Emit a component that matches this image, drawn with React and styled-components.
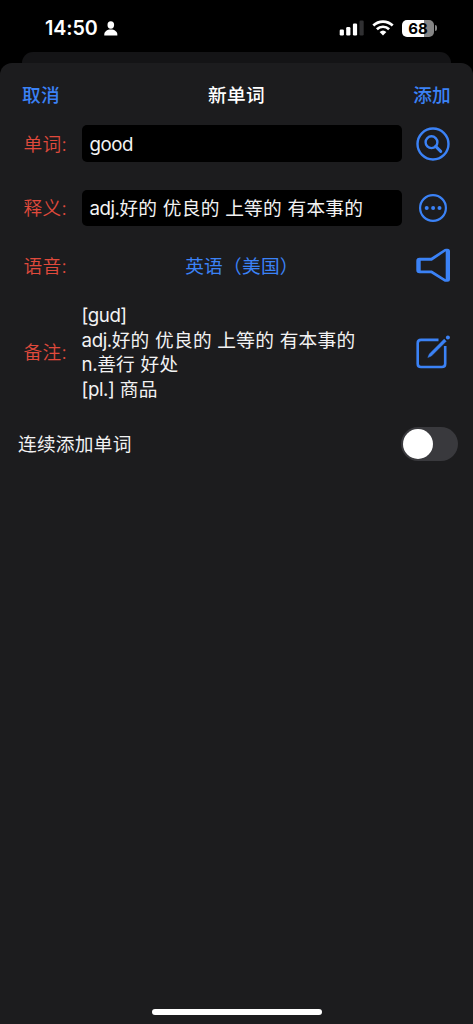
import { useState } from 'react';
import styled, { createGlobalStyle } from 'styled-components';

const blue = '#3b82f6';

function App() {

  const [keepAdding, setKeepAdding] = useState(false);

  return (
    <Screen>
      <GlobalStyle />
      <StatusBar>
        <Clock>14:50</Clock>
        <PersonIcon />
        <StatusIcons>
          <SignalIcon />
          <WifiIcon />
          <Battery><Level>68</Level></Battery>
          <BatteryCap />
        </StatusIcons>
      </StatusBar>
      <BackSheet />
      <Sheet>
        <NavBar>
          <NavButton>取消</NavButton>
          <Title>新单词</Title>
          <NavButton $end>添加</NavButton>
        </NavBar>

        <Row $height={37}>
          <Label>单词:</Label>
          <Field $line={39}><Latin>good</Latin></Field>
          <IconButton aria-label="search"><SearchIcon /></IconButton>
        </Row>
        <Row $height={36} $top={28}>
          <Label $lift={4}>释义:</Label>
          <Field $line={38}><Latin>adj.</Latin>好的 优良的 上等的 有本事的</Field>
          <IconButton aria-label="more"><MoreIcon /></IconButton>
        </Row>
        <Row $height={36} $top={21}>
          <Label>语音:</Label>
          <Language>英语（美国）</Language>
          <IconButton aria-label="speak"><SpeakerIcon /></IconButton>
        </Row>
        <Row $height={100} $top={19}>
          <Label $lift={4}>备注:</Label>
          <Notes>
            <p><Latin>[gud]</Latin></p>
            <p><Latin>adj.</Latin>好的 优良的 上等的 有本事的</p>
            <p><Latin>n.</Latin>善行 好处</p>
            <p><Latin>[pl.]</Latin> 商品</p>
          </Notes>
          <IconButton aria-label="edit"><EditIcon /></IconButton>
        </Row>

        <SwitchRow>
          <SwitchLabel>连续添加单词</SwitchLabel>
          <Switch role="switch" aria-checked={keepAdding} $on={keepAdding} onClick={() => setKeepAdding(!keepAdding)}>
            <Knob />
          </Switch>
        </SwitchRow>
        <HomeIndicator />
      </Sheet>
    </Screen>
  )
}

function PersonIcon() {
  return (
    <svg width="14" height="15" viewBox="0 0 14 15" fill="#fff">
      <ellipse cx="6.8" cy="4" rx="3.3" ry="3.7" />
      <path d="M.3 14.400C-.2 11 2.600 8.600 6.800 8.600s7 2.400 6.500 5.800Z" />
    </svg>
  )
}

function SignalIcon() {
  return (
    <svg width="25" height="16" viewBox="0 0 25 16" fill="#fff">
      <rect x="0.7" y="9.5" width="4.2" height="6" rx="1.2" />
      <rect x="7.2" y="7" width="4.2" height="8.5" rx="1.2" />
      <rect x="13.9" y="3.5" width="4.2" height="12" rx="1.2" />
      <rect x="20.5" y="0.5" width="4.2" height="15" rx="1.2" fill="#303032" />
    </svg>
  )
}

function WifiIcon() {
  return (
    <svg width="22" height="16" viewBox="0 0 22 16" fill="none" stroke="#fff" strokeWidth="2.7">
      <path d="M1.300 5.500a14 14 0 0 1 19.400 0" />
      <path d="M4.900 9.200a8.800 8.800 0 0 1 12.200 0" />
      <path d="M7.600 12.100a5 5 0 0 1 6.800 0L11 15.600Z" fill="#fff" stroke="none" />
    </svg>
  )
}

function SearchIcon() {
  return (
    <svg width="34" height="34" viewBox="0 0 34 34" fill="none" stroke={blue} strokeWidth="2.4">
      <circle cx="17" cy="17" r="15.5" />
      <circle cx="15.5" cy="15.2" r="5.9" />
      <path d="m19.700 19.400 5 5" strokeWidth="3" strokeLinecap="round" />
    </svg>
  )
}

function MoreIcon() {
  return (
    <svg width="34" height="34" viewBox="0 0 34 34" fill={blue}>
      <circle cx="17" cy="17" r="12.9" fill="none" stroke={blue} strokeWidth="2.2" />
      <circle cx="10.7" cy="17.1" r="2" />
      <circle cx="17.1" cy="17.1" r="2" />
      <circle cx="23.5" cy="17.1" r="2" />
    </svg>
  )
}

function SpeakerIcon() {
  return (
    <svg width="34" height="34" viewBox="0 0 34 34" fill={blue} fillRule="evenodd">
      <path d="M3.500 9.800H15L27.500 1.700Q28.800.800 30 .800h1.500Q34 .800 34 3.300v28q0 2.500-2.500 2.500H30q-1.200 0-2.500-.900L15 25.300H3.500Q.300 25.300.300 22.100V13Q.300 9.800 3.500 9.800Z M4.700 12.700v9.700h11.200L29.700 31.300V3.300L15.900 12.700Z" />
    </svg>
  )
}

function EditIcon() {
  return (
    <svg width="34" height="34" viewBox="0 0 34 34" fill="none" stroke={blue} strokeWidth="2.6">
      <path d="M22.500 4.900H5Q1.700 4.900 1.700 8.200v20.500Q1.700 32 5 32h20.900q3.300 0 3.300-3.300V10.900" />
      <path d="M11.800 22.600 13.300 19 28.200 4.100 30.300 6.200 15.400 21.100Z" fill={blue} stroke={blue} strokeWidth=".4" />
      <circle cx="31.9" cy="2.4" r="2" fill={blue} stroke="none" />
    </svg>
  )
}

const GlobalStyle = createGlobalStyle`
  * {
    box-sizing: border-box;
  }

  body {
    margin: 0;
    background: #000;
  }

  p {
    margin: 0;
  }

  button {
    padding: 0;
    border: 0;
    background: none;
    font: inherit;
    letter-spacing: inherit;
    cursor: pointer;
  }
`;

const Screen = styled.div`
  display: flex;
  flex-direction: column;
  width: 100%;
  height: 1024px;
  overflow: hidden;
  background: #000;
  color: #f2f2f3;
  font-family: Inter, 'Noto Sans CJK SC', sans-serif;
  font-size: 18.7px;
  letter-spacing: 0.25px;
`;

const StatusBar = styled.header`
  display: flex;
  align-items: center;
  height: 52px;
  padding: 4px 36px 0 45px;
`;

const Clock = styled.span`
  width: 53px;
  margin-right: 6px;
  color: #fff;
  font-size: 19.7px;
  font-weight: 600;
  letter-spacing: -0.1px;
`;

const StatusIcons = styled.div`
  display: flex;
  align-items: center;
  margin-left: auto;

  svg + svg {
    margin-left: 8px;
  }
`;

const Battery = styled.div`
  display: flex;
  align-items: center;
  justify-content: center;
  width: 32px;
  height: 17px;
  margin-left: 8px;
  border-radius: 5px;
  background: linear-gradient(to right, #fff 68%, #858585 68%);
`;

const Level = styled.span`
  color: #000;
  font-size: 15px;
  font-weight: 700;
  line-height: 17px;
  letter-spacing: 0;
`;

const BatteryCap = styled.div`
  width: 2px;
  height: 6px;
  margin-left: 1px;
  border-radius: 0 3px 3px 0;
  background: #858585;
`;

const BackSheet = styled.div`
  flex: none;
  height: 24px;
  margin: 0 22px -13px;
  border-radius: 11px 11px 0 0;
  background: #141416;
`;

const Sheet = styled.main`
  display: flex;
  flex: 1;
  flex-direction: column;
  border-radius: 12px 12px 0 0;
  background: #1c1c1e;
`;

const NavBar = styled.nav`
  display: grid;
  grid-template-columns: 1fr auto 1fr;
  align-items: center;
  height: 62px;
  padding: 0 22px 2px;
`;

const NavButton = styled.button`
  justify-self: ${props => props.$end ? 'end' : 'start'};
  color: ${blue};
  font-weight: 500;
`;

const Title = styled.h1`
  margin: 0;
  color: #fff;
  font-size: inherit;
  font-weight: 500;
`;

const Row = styled.div`
  display: grid;
  grid-template-columns: 58px 320px 34px;
  column-gap: 14px;
  align-items: center;
  height: ${props => props.$height}px;
  margin-top: ${props => props.$top || 0}px;
  padding-left: 10px;
`;

const Label = styled.span`
  justify-self: end;
  padding: 0 1px ${props => props.$lift || 2}px 0;
  color: #e04a3c;
  font-weight: 350;
  white-space: nowrap;
`;

const Field = styled.div`
  height: ${props => props.$line - 2}px;
  padding-left: 7.4px;
  border-radius: 5px;
  background: #000;
  line-height: ${props => props.$line}px;
  white-space: nowrap;
  overflow: hidden;
`;

const Latin = styled.span`
  letter-spacing: -0.45px;
`;

const Language = styled.button`
  padding-bottom: 2px;
  color: ${blue};
  white-space: nowrap;
`;

const Notes = styled.div`
  margin: 1px 0 -1px -0.4px;
  line-height: 24.5px;
  white-space: nowrap;
`;

const IconButton = styled.button`
  width: 34px;
  height: 34px;

  svg {
    display: block;
  }
`;

const SwitchRow = styled.div`
  display: flex;
  align-items: center;
  justify-content: space-between;
  height: 34px;
  margin-top: 25px;
  padding: 0 15px 0 18px;
`;

const SwitchLabel = styled.span`
  padding-bottom: 3px;
`;

const Switch = styled.button`
  display: flex;
  align-items: center;
  justify-content: ${props => props.$on ? 'flex-end' : 'flex-start'};
  width: 57px;
  height: 34px;
  padding: 0 2px;
  border-radius: 17px;
  background: ${props => props.$on ? '#30d158' : '#39393d'};
`;

const Knob = styled.span`
  width: 30px;
  height: 30px;
  border-radius: 50%;
  background: #fff;
`;

const HomeIndicator = styled.div`
  width: 170px;
  height: 6px;
  margin: auto auto 9px;
  border-radius: 3px;
  background: #fff;
`;

export default App;
